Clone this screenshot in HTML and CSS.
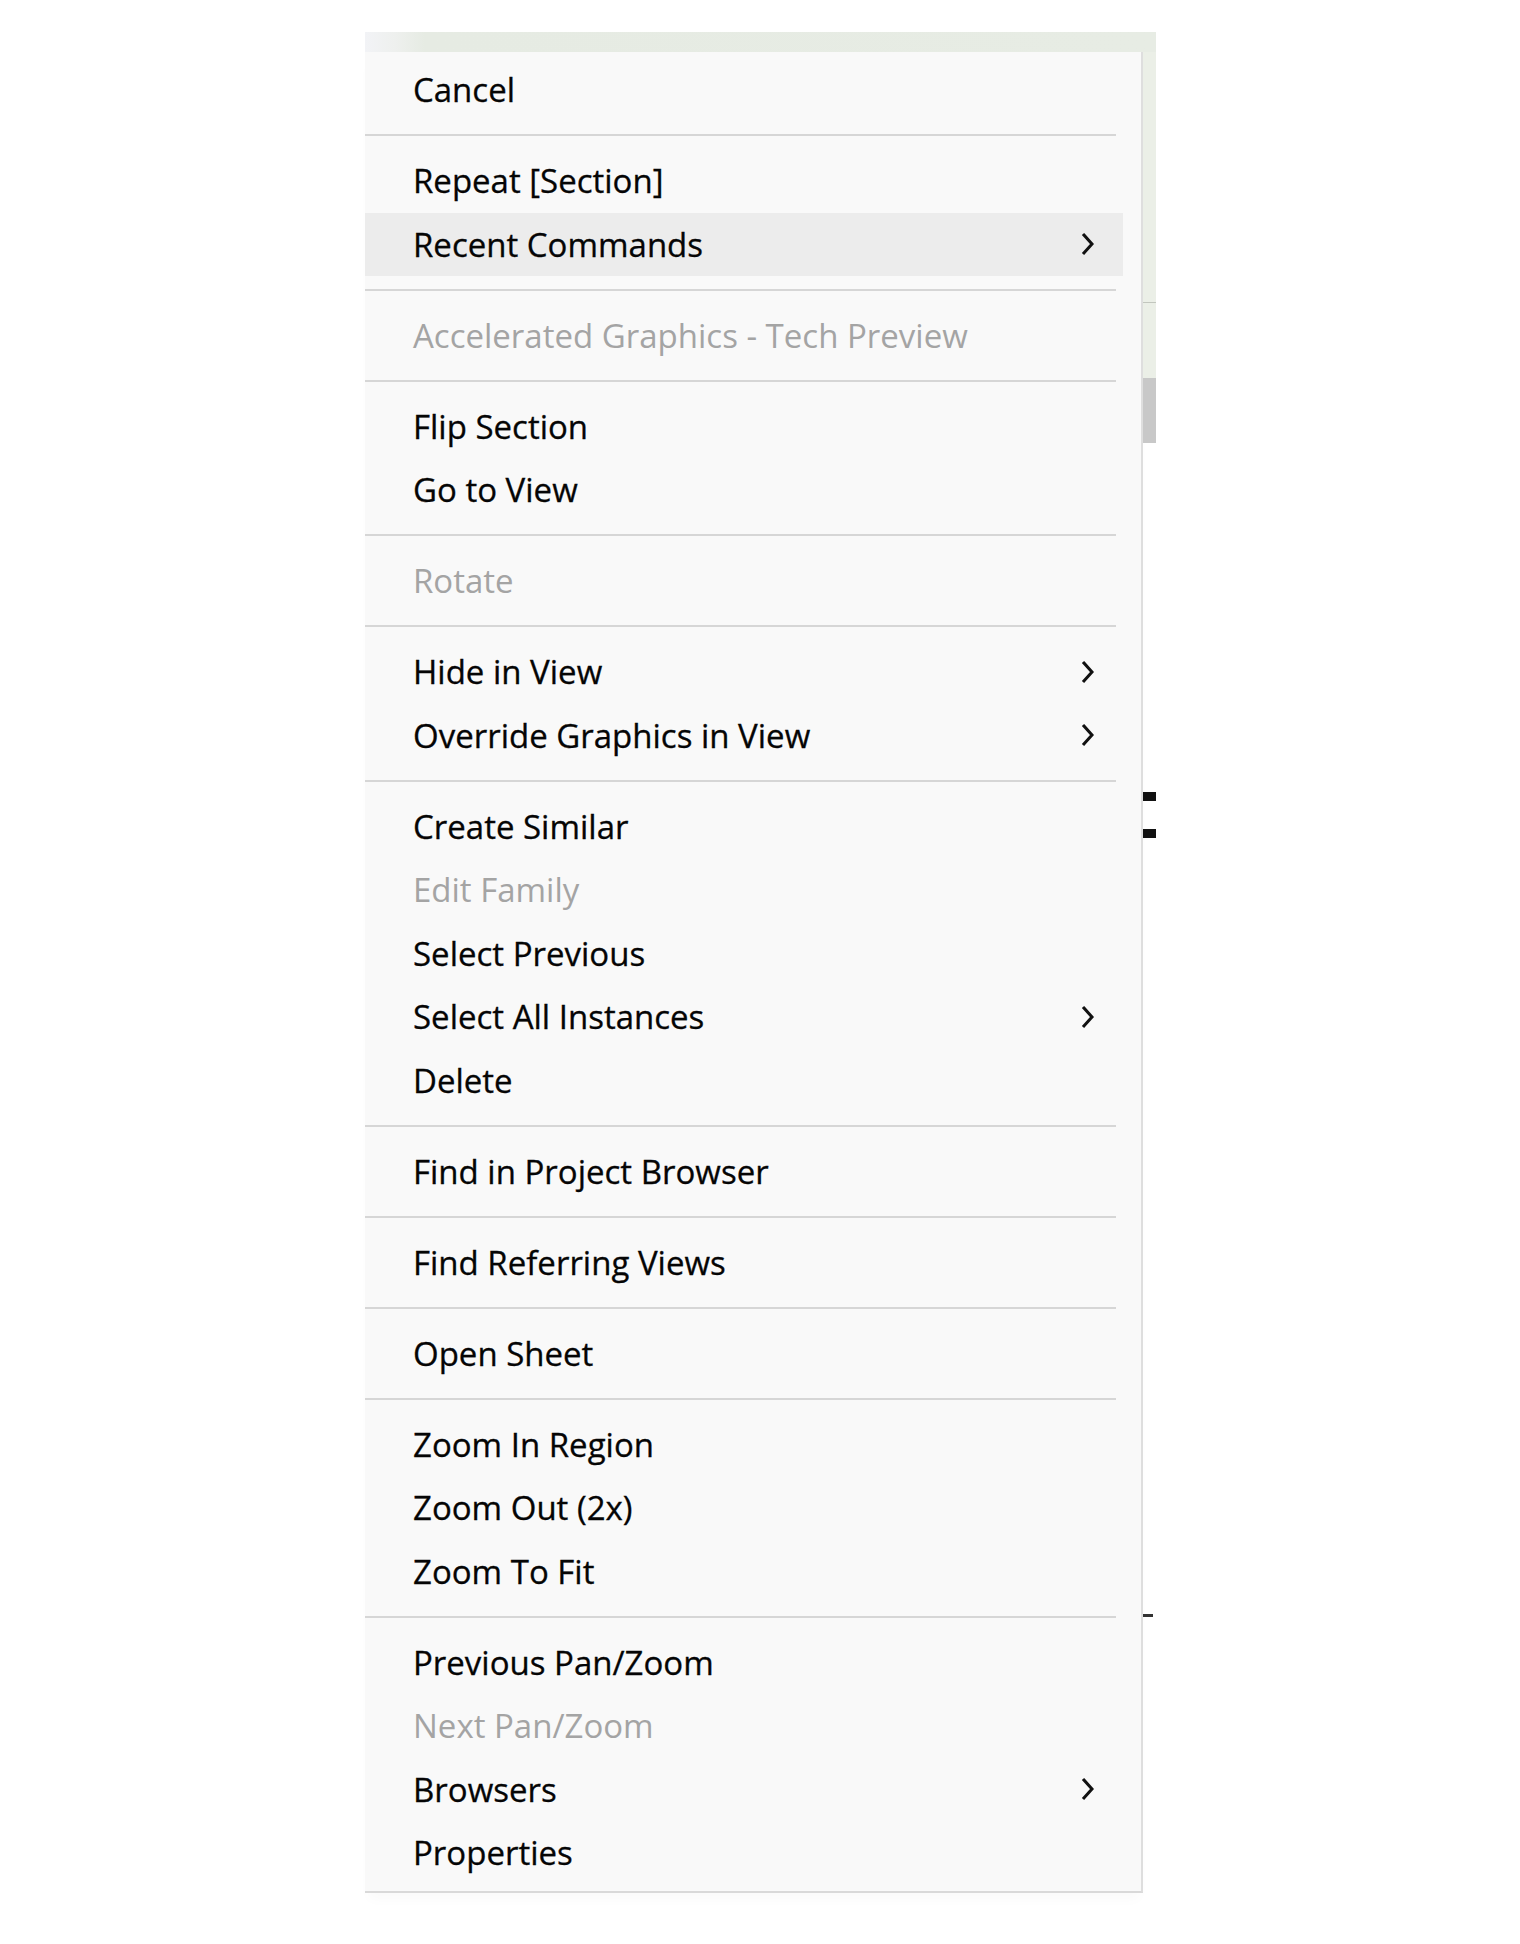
FILE: index.html
```html
<!DOCTYPE html>
<html lang="en">
<head>
<meta charset="utf-8">
<title>Context menu</title>
<link rel="stylesheet" href="styles.css">
</head>
<body>
<div class="stage">
  <div class="topbar"></div>
  <div class="row">
    <div class="menu">
      <div class="item">Cancel</div>
      <div class="sep"><span></span></div>
      <div class="item">Repeat [Section]</div>
      <div class="item sub hover">Recent Commands<svg class="chev" viewBox="0 0 14 24"><path d="M3 3 L11 12 L3 21"/></svg></div>
      <div class="sep"><span></span></div>
      <div class="item off">Accelerated Graphics - Tech Preview</div>
      <div class="sep"><span></span></div>
      <div class="item">Flip Section</div>
      <div class="item">Go to View</div>
      <div class="sep"><span></span></div>
      <div class="item off">Rotate</div>
      <div class="sep"><span></span></div>
      <div class="item sub">Hide in View<svg class="chev" viewBox="0 0 14 24"><path d="M3 3 L11 12 L3 21"/></svg></div>
      <div class="item sub">Override Graphics in View<svg class="chev" viewBox="0 0 14 24"><path d="M3 3 L11 12 L3 21"/></svg></div>
      <div class="sep"><span></span></div>
      <div class="item">Create Similar</div>
      <div class="item off">Edit Family</div>
      <div class="item">Select Previous</div>
      <div class="item sub">Select All Instances<svg class="chev" viewBox="0 0 14 24"><path d="M3 3 L11 12 L3 21"/></svg></div>
      <div class="item">Delete</div>
      <div class="sep"><span></span></div>
      <div class="item">Find in Project Browser</div>
      <div class="sep"><span></span></div>
      <div class="item">Find Referring Views</div>
      <div class="sep"><span></span></div>
      <div class="item">Open Sheet</div>
      <div class="sep"><span></span></div>
      <div class="item">Zoom In Region</div>
      <div class="item">Zoom Out (2x)</div>
      <div class="item">Zoom To Fit</div>
      <div class="sep"><span></span></div>
      <div class="item">Previous Pan/Zoom</div>
      <div class="item off">Next Pan/Zoom</div>
      <div class="item sub">Browsers<svg class="chev" viewBox="0 0 14 24"><path d="M3 3 L11 12 L3 21"/></svg></div>
      <div class="item">Properties</div>
    </div>
    <div class="side">
      <div class="side-green g1"></div>
      <div class="tick"></div>
      <div class="side-green g2"></div>
      <div class="thumb"></div>
      <div class="mark m1"></div>
      <div class="mark m2"></div>
      <div class="dash"></div>
    </div>
  </div>
</div>
</body>
</html>
```

FILE: styles.css
```css
html, body {
  margin: 0;
  padding: 0;
  background: #ffffff;
}

body {
  font-family: "Open Sans", "Noto Sans", "Liberation Sans", sans-serif;
  width: 1520px;
  height: 1944px;
  overflow: hidden;
}

.stage {
  padding: 32px 0 0 365px;
  width: 791px;
}

.topbar {
  height: 20px;
  background: linear-gradient(to right, #f2f3f6 0px, #eef0ee 30px, #e6ebe3 60px, #e7ece4 100%);
}

.row {
  display: flex;
  align-items: flex-start;
}

.menu {
  width: 758px;
  padding: 6px 18px 6.5px 0;
  background: #f9f9f9;
  border-right: 2px solid #dedede;
  border-bottom: 2px solid #d9d9d9;
  box-shadow: 0 10px 12px -4px rgba(0, 0, 0, 0.025);
  display: flex;
  flex-direction: column;
}

.item {
  height: 63.5px;
  display: flex;
  align-items: center;
  justify-content: space-between;
  padding: 0 28px 0 48px;
  font-size: 33px;
  color: #050505;
  -webkit-text-stroke: 0.3px currentColor;
  white-space: nowrap;
}

.item.hover {
  background: #ececec;
}

.item.off {
  color: #a4a4a4;
  -webkit-text-stroke: 0;
}

.chev {
  width: 14px;
  height: 24px;
  flex: none;
}

.chev path {
  fill: none;
  stroke: #111111;
  stroke-width: 3;
  stroke-linecap: square;
  stroke-linejoin: miter;
}

.sep {
  height: 27.5px;
  display: flex;
  align-items: center;
  padding-right: 7px;
}

.sep span {
  display: block;
  flex: 1;
  height: 2px;
  background: #d6d6d6;
}

.side {
  width: 13px;
  display: flex;
  flex-direction: column;
}

.side-green {
  background: #ebefe7;
}

.g1 {
  height: 250px;
}

.tick {
  height: 1px;
  background: #c2c6be;
}

.g2 {
  height: 75px;
}

.thumb {
  height: 65px;
  background: #c8c8c8;
}

.mark {
  height: 9px;
  background: #111111;
}

.m1 {
  margin-top: 349px;
}

.m2 {
  margin-top: 28px;
}

.dash {
  height: 3px;
  width: 10px;
  margin-top: 776px;
  background: #333333;
}
```
